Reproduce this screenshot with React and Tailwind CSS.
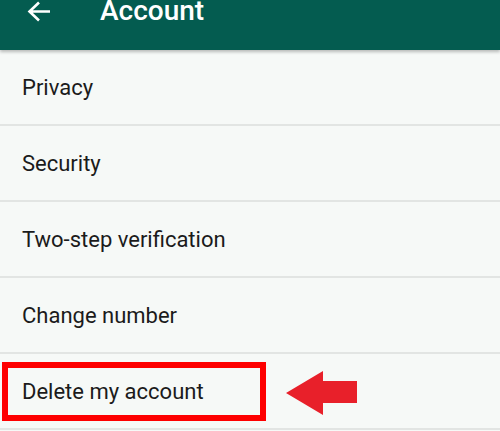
import React from 'react';

const items = ['Privacy', 'Security', 'Two-step verification', 'Change number'];

export default function App() {
	return (
		<div
			className="w-[500px] h-[431px] overflow-hidden bg-[#f6f9f7] relative"
			style={{ fontFamily: 'Roboto, "Liberation Sans", sans-serif' }}
		>
			<div className="h-[50px] bg-[#045c50] flex items-start shadow-[0_2px_3px_rgba(0,0,0,0.25)] relative z-10">
				<svg className="ml-[27px] mt-[1px]" width="24" height="22" viewBox="0 0 24 22" fill="none" stroke="#ffffff" strokeWidth="2.6">
					<path d="M23 10.5H3M12 1.5L2.5 10.5 12 19.5" />
				</svg>
				<div className="ml-[49px] -mt-[3px] text-white text-[28px] leading-none font-medium">Account</div>
			</div>
			{items.map((t) => (
				<div key={t} className="h-[76px] border-b-2 border-[#e2e5e3] flex items-center pl-[22px] text-[22px] text-[#1b1b1b]">
					{t}
				</div>
			))}
			<div className="h-[76px] border-b-2 border-[#e2e5e3] flex items-center relative">
				<div className="ml-[2px] mt-[1px] w-[264px] h-[59px] border-[6px] border-[#fe0000] flex items-center pl-[14px] text-[22px] text-[#1b1b1b]">
					Delete my account
				</div>
				<svg className="ml-[20px] mt-[4px]" width="72" height="44" viewBox="0 0 72 44">
					<polygon points="0,22 37,0 37,10 71,10 71,32 37,32 37,44" fill="#e8202a" />
				</svg>
			</div>
			<div className="pl-[32px] pt-[1px] text-[16px] text-[#128c7e] font-medium">FAQ and help</div>
		</div>
	);
}
